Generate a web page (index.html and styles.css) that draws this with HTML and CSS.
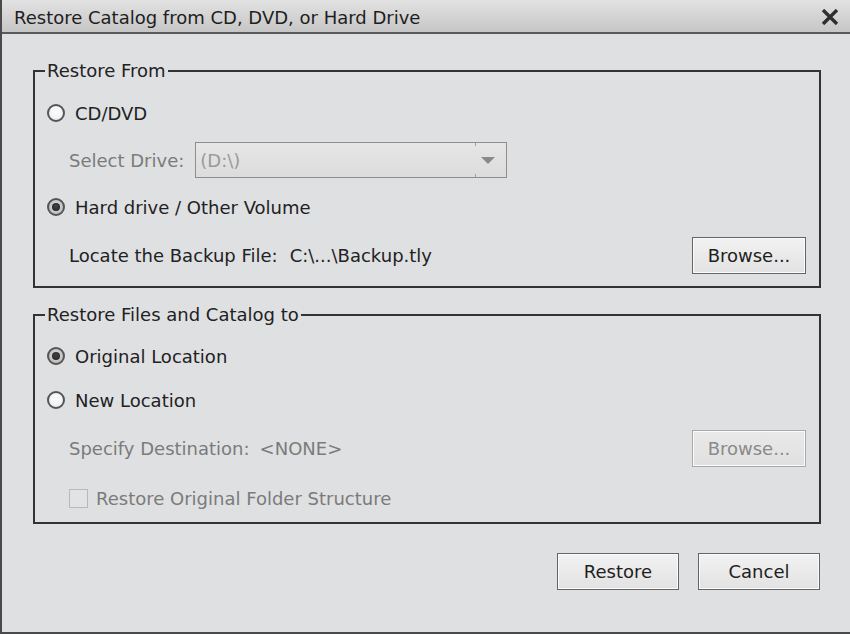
FILE: index.html
```html
<!DOCTYPE html>
<html>
<head>
<meta charset="utf-8">
<link rel="stylesheet" href="styles.css">
</head>
<body>
<div class="window">
  <div class="titlebar">
    <span class="title">Restore Catalog from CD, DVD, or Hard Drive</span>
    <svg class="close" width="20" height="16" viewBox="0 0 20 16"><path d="M3 1 L17 15 M17 1 L3 15" stroke="#2e2e2e" stroke-width="3.4" stroke-linecap="butt"/></svg>
  </div>
  <div class="content">
    <div class="group g1">
      <span class="legend">Restore From</span>
      <div class="row r48">
        <span class="radio"></span><span class="label">CD/DVD</span>
      </div>
      <div class="row r46 indent">
        <span class="label dis">Select Drive:</span>
        <div class="select"><span class="sel-text">(D:\)</span><span class="sep"></span><span class="arrow"></span></div>
      </div>
      <div class="row r48">
        <span class="radio checked"></span><span class="label">Hard drive / Other Volume</span>
      </div>
      <div class="row r48 indent">
        <span class="label">Locate the Backup File:</span>
        <span class="label path">C:\...\Backup.tly</span>
        <span class="spacer"></span>
        <button class="btn browse">Browse...</button>
      </div>
    </div>
    <div class="group g2">
      <span class="legend">Restore Files and Catalog to</span>
      <div class="row r48">
        <span class="radio checked"></span><span class="label">Original Location</span>
      </div>
      <div class="row r40">
        <span class="radio"></span><span class="label">New Location</span>
      </div>
      <div class="row r56 indent">
        <span class="label dis">Specify Destination:</span>
        <span class="label dis path2">&lt;NONE&gt;</span>
        <span class="spacer"></span>
        <button class="btn browse disabled">Browse...</button>
      </div>
      <div class="row r44 indent">
        <span class="checkbox"></span><span class="label dis">Restore Original Folder Structure</span>
      </div>
    </div>
    <div class="footer">
      <button class="btn action">Restore</button>
      <button class="btn action">Cancel</button>
    </div>
  </div>
</div>
</body>
</html>
```
FILE: styles.css
```css
html, body {
  margin: 0;
  padding: 0;
  width: 850px;
  height: 634px;
  overflow: hidden;
  background: #dfe0e2;
}
.window {
  box-sizing: border-box;
  width: 850px;
  height: 634px;
  border-left: 2px solid #4a4a4a;
  border-bottom: 2px solid #4a4a4a;
  background: #dfe0e2;
  font-family: "DejaVu Sans", sans-serif;
  font-size: 18px;
  color: #222;
}
.titlebar {
  height: 32px;
  border-bottom: 2px solid #5a5a5a;
  background: linear-gradient(#e2e2e2, #c6c6c6);
  display: flex;
  align-items: center;
  padding-left: 12px;
  padding-right: 10px;
}
.title {
  flex: 1;
  font-size: 18px;
  color: #1e1e1e;
  padding-top: 3px;
}
.close {
  display: block;
  margin-top: 1px;
}
.content {
  padding: 36px 29px 0 31px;
}
.group {
  position: relative;
  border: 2px solid #333;
  box-sizing: border-box;
}
.g1 {
  height: 218px;
  padding-top: 17px;
}
.g2 {
  margin-top: 26px;
  height: 210px;
  padding-top: 16px;
}
.legend {
  position: absolute;
  top: -11px;
  left: 10px;
  padding: 0 2px;
  background: #dfe0e2;
  line-height: 20px;
  color: #222;
}
.row {
  display: flex;
  align-items: center;
  padding-left: 12px;
  padding-right: 13px;
}
.indent { padding-left: 34px; }
.r40 { height: 40px; }
.r44 { height: 44px; }
.r46 { height: 46px; }
.r48 { height: 48px; }
.r56 { height: 56px; }
.label { white-space: nowrap; }
.dis { color: #7b7b7b; }
.path { margin-left: 12px; }
.path2 { margin-left: 10px; }
.spacer { flex: 1; }
.radio {
  box-sizing: border-box;
  width: 18px;
  height: 18px;
  border-radius: 50%;
  border: 2px solid #555;
  background: radial-gradient(circle at 50% 40%, #ffffff 0%, #f2f2f2 60%, #dcdcdc 100%);
  margin-right: 10px;
  position: relative;
  flex: none;
}
.radio.checked {
  background: radial-gradient(circle at 50% 40%, #d8d8d8 0%, #b8b8b8 100%);
}
.radio.checked::after {
  content: "";
  position: absolute;
  left: 3px;
  top: 3px;
  width: 8px;
  height: 8px;
  border-radius: 50%;
  background: radial-gradient(circle at 50% 40%, #444 0%, #1c1c1c 100%);
}
.checkbox {
  box-sizing: border-box;
  width: 19px;
  height: 19px;
  border: 1px solid #b9b9b9;
  background: #e3e3e3;
  margin-right: 8px;
  flex: none;
}
.select {
  box-sizing: border-box;
  position: relative;
  margin-left: 11px;
  width: 312px;
  height: 36px;
  border: 1px solid #8e8e8e;
  background: linear-gradient(#e6e6e6, #dcdcdc);
  display: flex;
  align-items: center;
  padding-left: 4px;
}
.sel-text {
  flex: 1;
  color: #9a9a9a;
}
.sep {
  width: 1px;
  height: 34px;
  background: linear-gradient(#a0a0a0 0 3px, transparent 3px calc(100% - 3px), #a0a0a0 calc(100% - 3px));
  margin-right: 5px;
}
.arrow {
  width: 0;
  height: 0;
  border-left: 7px solid transparent;
  border-right: 7px solid transparent;
  border-top: 7px solid #8a8a8a;
  margin-right: 11px;
}
.btn {
  box-sizing: border-box;
  font-family: "DejaVu Sans", sans-serif;
  font-size: 18px;
  color: #1e1e1e;
  border: 1px solid #656565;
  box-shadow: inset 0 0 0 1px #fbfbfb;
  background: linear-gradient(#f2f2f2, #e2e2e2);
  padding: 0;
  margin: 0;
}
.browse {
  width: 114px;
  height: 37px;
  margin-right: 0;
}
.btn.disabled {
  color: #8a8a8a;
  border-color: #a9a9a9;
  background: linear-gradient(#e9e9e9, #e0e0e0);
}
.footer {
  display: flex;
  justify-content: flex-end;
  gap: 19px;
  margin-top: 29px;
  padding-right: 1px;
}
.action {
  width: 122px;
  height: 37px;
}
```
